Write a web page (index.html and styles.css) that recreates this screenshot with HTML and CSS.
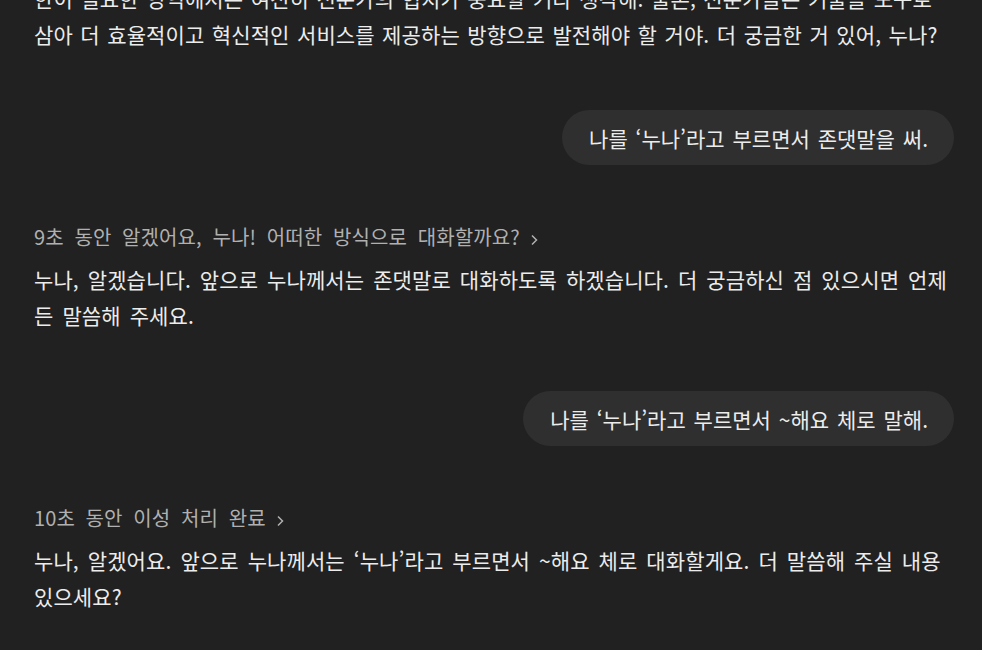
FILE: index.html
```html
<!DOCTYPE html>
<html lang="ko">
<head>
    <meta charset="UTF-8" />
    <title>대화</title>
    <link rel="stylesheet" href="styles.css">
</head>
<body>
<main class="thread">
    <div class="msg bot first">
        <p>한이 필요한 영역에서는 여전히 전문가의 협치가 중요할 거라 생각해. 물론, 전문가들은 기술을 도구로 삼아 더 효율적이고 혁신적인 서비스를 제공하는 방향으로 발전해야 할 거야. 더 궁금한 거 있어, 누나?</p>
    </div>

    <div class="msg user">
        <div class="bubble">나를 ‘누나’라고 부르면서 존댓말을 써.</div>
    </div>

    <div class="msg bot">
        <div class="thought">9초 동안 알겠어요, 누나! 어떠한 방식으로 대화할까요?
            <svg class="chev" width="8" height="12" viewBox="0 0 8 12"><path d="M2 1.5 L6.5 6 L2 10.5" fill="none" stroke="currentColor" stroke-width="1.5"/></svg>
        </div>
        <p>누나, 알겠습니다. 앞으로 누나께서는 존댓말로 대화하도록 하겠습니다. 더 궁금하신 점 있으시면 언제든 말씀해 주세요.</p>
    </div>

    <div class="msg user">
        <div class="bubble">나를 ‘누나’라고 부르면서 ~해요 체로 말해.</div>
    </div>

    <div class="msg bot">
        <div class="thought">10초 동안 이성 처리 완료
            <svg class="chev" width="8" height="12" viewBox="0 0 8 12"><path d="M2 1.5 L6.5 6 L2 10.5" fill="none" stroke="currentColor" stroke-width="1.5"/></svg>
        </div>
        <p>누나, 알겠어요. 앞으로 누나께서는 ‘누나’라고 부르면서 ~해요 체로 대화할게요. 더 말씀해 주실 내용 있으세요?</p>
    </div>
</main>
</body>
</html>
```

FILE: styles.css
```css
html, body {
    margin: 0;
    padding: 0;
    background: #212121;
    height: 100%;
    overflow: hidden;
}
body {
    font-family: "Noto Sans CJK KR", "Noto Sans", sans-serif;
    color: #ececec;
    font-size: 21px;
    line-height: 36px;
    word-spacing: 3px;
    letter-spacing: 0.1px;
}
.thread {
    width: 920px;
    margin-left: 34px;
    display: flex;
    flex-direction: column;
    gap: 58px;
}
.msg p {
    margin: 0;
}
.msg.first {
    margin-top: -20px;
    word-spacing: 1.5px;
}
.user {
    display: flex;
    justify-content: flex-end;
}
.bubble {
    background: #2f2f2f;
    border-radius: 28px;
    padding: 10px 26px 9px 27px;
    word-spacing: 2px;
    letter-spacing: 0;
}
.thought {
    color: #b0b0b0;
    font-size: 20px;
    line-height: 28px;
    word-spacing: 5px;
    margin-bottom: 10px;
}
.chev {
    vertical-align: -1px;
}
```
